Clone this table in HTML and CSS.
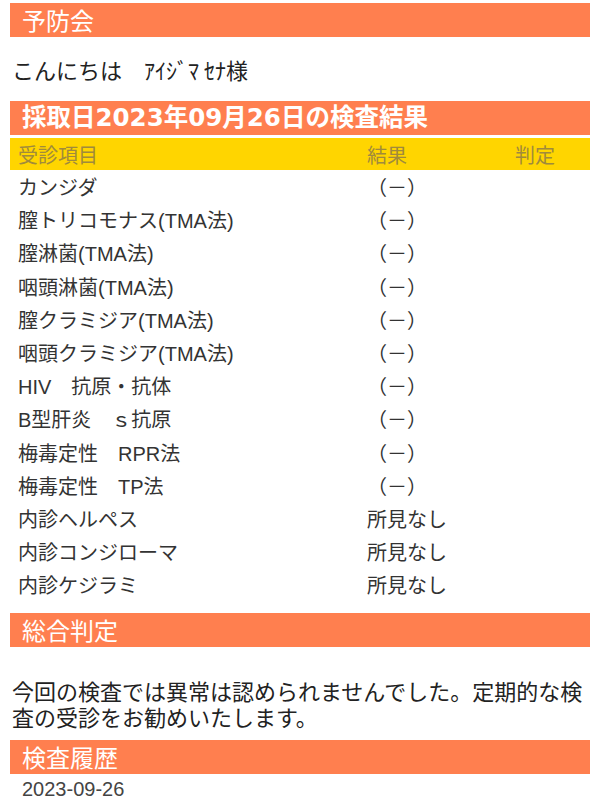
FILE: index.html
```html
<!DOCTYPE html>
<html lang="ja">
<head>
<meta charset="utf-8">
<link rel="stylesheet" href="styles.css">
</head>
<body>
<div class="page">
  <h1 class="bar">予防会</h1>
  <p class="greeting">こんにちは　ｱｲｼﾞﾏ ｾﾅ様</p>
  <h2 class="bar bar-bold">採取日2023年09月26日の検査結果</h2>
  <div class="table">
    <div class="row head">
      <div class="c1">受診項目</div><div class="c2">結果</div><div class="c3">判定</div>
    </div>
    <div class="row"><div class="c1">カンジダ</div><div class="c2">（－）</div><div class="c3"></div></div>
    <div class="row"><div class="c1">膣トリコモナス(TMA法)</div><div class="c2">（－）</div><div class="c3"></div></div>
    <div class="row"><div class="c1">膣淋菌(TMA法)</div><div class="c2">（－）</div><div class="c3"></div></div>
    <div class="row"><div class="c1">咽頭淋菌(TMA法)</div><div class="c2">（－）</div><div class="c3"></div></div>
    <div class="row"><div class="c1">膣クラミジア(TMA法)</div><div class="c2">（－）</div><div class="c3"></div></div>
    <div class="row"><div class="c1">咽頭クラミジア(TMA法)</div><div class="c2">（－）</div><div class="c3"></div></div>
    <div class="row"><div class="c1">HIV　抗原・抗体</div><div class="c2">（－）</div><div class="c3"></div></div>
    <div class="row"><div class="c1">B型肝炎　ｓ抗原</div><div class="c2">（－）</div><div class="c3"></div></div>
    <div class="row"><div class="c1">梅毒定性　RPR法</div><div class="c2">（－）</div><div class="c3"></div></div>
    <div class="row"><div class="c1">梅毒定性　TP法</div><div class="c2">（－）</div><div class="c3"></div></div>
    <div class="row"><div class="c1">内診ヘルペス</div><div class="c2">所見なし</div><div class="c3"></div></div>
    <div class="row"><div class="c1">内診コンジローマ</div><div class="c2">所見なし</div><div class="c3"></div></div>
    <div class="row"><div class="c1">内診ケジラミ</div><div class="c2">所見なし</div><div class="c3"></div></div>
  </div>
  <h2 class="bar">総合判定</h2>
  <p class="summary">今回の検査では異常は認められませんでした。定期的な検査の受診をお勧めいたします。</p>
  <h2 class="bar">検査履歴</h2>
  <p class="date">2023-09-26</p>
</div>
</body>
</html>
```

FILE: styles.css
```css
html, body {
  margin: 0;
  padding: 0;
  background: #ffffff;
}
body {
  font-family: "Liberation Sans", "Noto Sans CJK JP", sans-serif;
  color: #333333;
}
.page {
  padding: 3px 10px 0 10px;
  display: flex;
  flex-direction: column;
}
.bar {
  margin: 0;
  height: 34px;
  line-height: 34px;
  background: #ff7f4f;
  color: #ffffff;
  font-family: "Noto Sans CJK JP", sans-serif;
  font-size: 24px;
  font-weight: 400;
  padding-left: 12px;
}
.bar-bold {
  font-family: "DejaVu Sans", "Noto Sans CJK JP", sans-serif;
  font-size: 24.5px;
  font-weight: 700;
}
.greeting {
  margin: 17px 0 17px 2px;
  font-family: "Noto Sans CJK JP", sans-serif;
  font-size: 22px;
  line-height: 30px;
  color: #222222;
}
.table {
  display: flex;
  flex-direction: column;
  margin-top: 3px;
  margin-bottom: 12px;
}
.row {
  display: grid;
  grid-template-columns: 349px 148px 1fr;
  height: 33.2px;
  align-items: center;
  font-size: 20px;
  color: #333333;
}
.row > div {
  padding-left: 8px;
  white-space: nowrap;
}
.row.head {
  height: 32px;
  background: #ffd500;
  color: #a08a3c;
}
.summary {
  margin: 30px 0 11px 2px;
  font-family: "Noto Sans CJK JP", sans-serif;
  font-size: 22px;
  line-height: 26px;
  color: #222222;
}
.date {
  margin: 4px 0 0 12px;
  font-size: 20px;
  line-height: 22px;
  color: #444444;
}
```
